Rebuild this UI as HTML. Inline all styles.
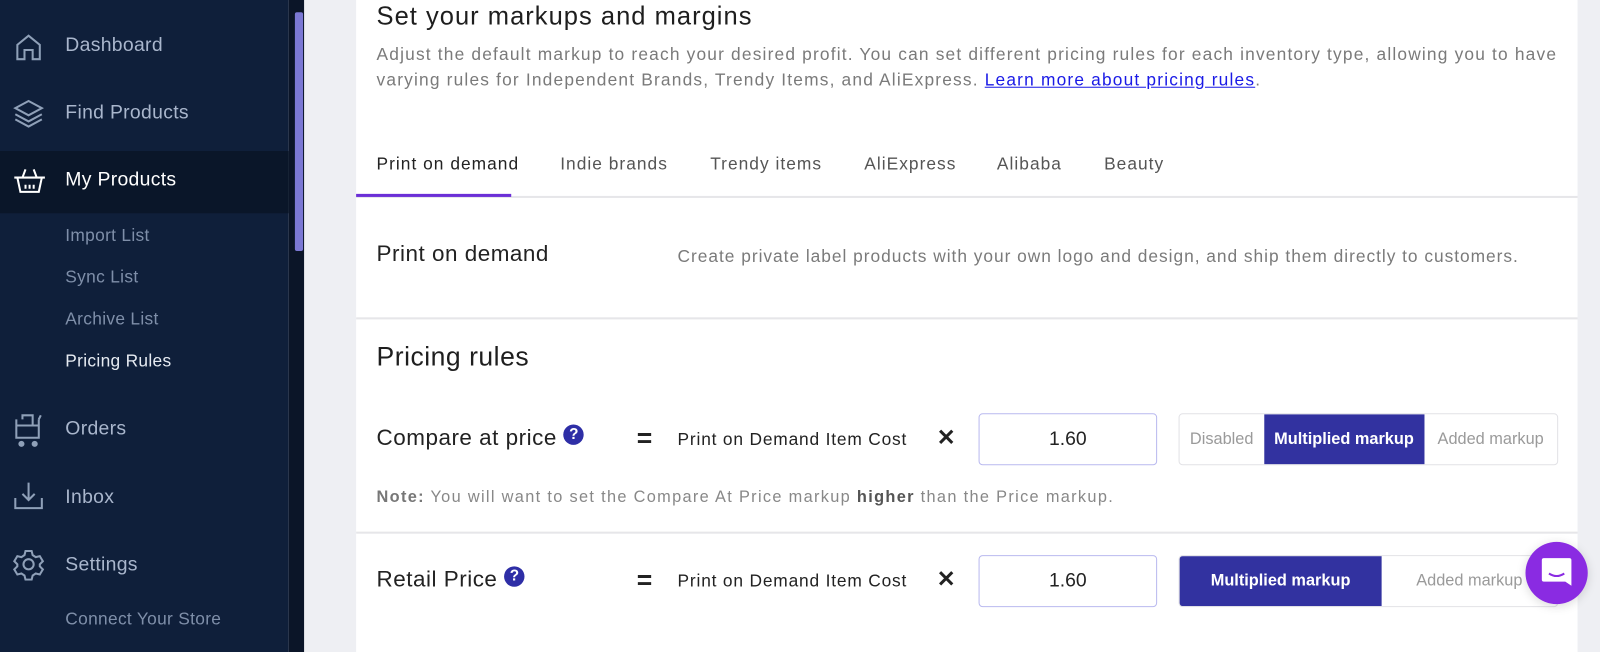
<!DOCTYPE html>
<html><head><meta charset="utf-8"><style>
*{box-sizing:border-box;margin:0;padding:0}
body{width:1600px;height:639px;overflow:hidden;background:#eeeff3;font-family:"Liberation Sans",sans-serif;position:relative}
.w{position:absolute;left:0;top:0;width:1568px;height:626px;transform:scale(1.0204);transform-origin:0 0}
.sb{position:absolute;left:0;top:0;width:283px;height:639px;background:#0f1f3a}
.sc{position:absolute;left:283px;top:0;width:15px;height:639px;background:#0b1528}
.thumb{position:absolute;left:289px;top:12px;width:8px;height:234px;background:#7b78d4;border-radius:2px}
.it{position:absolute;left:64px;color:#a9b6cc;font-size:19px;letter-spacing:.3px}
.sub{position:absolute;left:64px;color:#7f8fa9;font-size:17px;letter-spacing:.3px}
.ic{position:absolute;left:12px}
.card{position:absolute;left:349px;top:0;width:1197px;height:639px;background:#fff}
.a{position:absolute;white-space:nowrap}
.hr{position:absolute;left:349px;width:1197px;height:2px;background:#e6e6e9}
.q{display:inline-block;width:20px;height:20px;border-radius:50%;background:#2e2ea6;color:#fff;font-size:15px;font-weight:bold;text-align:center;line-height:20px;letter-spacing:0}
.inp{position:absolute;left:959px;width:175px;height:51px;border:1px solid #b9b9ef;border-radius:4px;font-size:19px;text-align:center;line-height:49px;color:#222}
.seg{position:absolute;height:51px;border:1px solid #e2e2e6;border-radius:4px;overflow:hidden;display:flex;font-size:16px;color:#9a9a9a}
.seg div{display:flex;align-items:center;justify-content:center;height:100%}
.on{background:#3232a0;color:#fff;font-weight:bold}
.tab{font-size:17px;letter-spacing:1px;color:#555;top:151px}
</style></head><body><div class="w">
<div class="sb"></div>
<div style="position:absolute;left:0;top:148px;width:283px;height:61px;background:#0a1629"></div>
<div class="sc"></div><div class="thumb"></div>
<svg class="ic" style="top:31px" width="32" height="32" viewBox="0 0 32 32" fill="none" stroke="#8fa0b8" stroke-width="2"><path d="M5 27V13L16 4l11 9v14h-7v-9h-8v9z"/></svg>
<div class="it" style="top:34px">Dashboard</div>
<svg class="ic" style="top:96px" width="32" height="32" viewBox="0 0 32 32" fill="none" stroke="#8fa0b8" stroke-width="2"><path d="M3 10l13-7 13 7-13 7z M3 16l13 7 13-7 M3 21l13 7 13-7"/></svg>
<div class="it" style="top:100px">Find Products</div>
<svg class="ic" style="top:161px" width="34" height="32" viewBox="0 0 34 32" fill="none" stroke="#fff" stroke-width="2"><path d="M2 13h30M5 13l3 14h18l3-14M10 13l3-8M24 13l-3-8M13 20v4M17 20v4M21 20v4"/></svg>
<div class="it" style="top:166px;color:#fff">My Products</div>
<div class="sub" style="top:221px">Import List</div>
<div class="sub" style="top:262px">Sync List</div>
<div class="sub" style="top:303px">Archive List</div>
<div class="sub" style="top:344px;color:#e6ebf2">Pricing Rules</div>
<svg class="ic" style="top:405px" width="32" height="34" viewBox="0 0 32 34" fill="none" stroke="#8fa0b8" stroke-width="2"><path d="M4 6v18h22V6M4 12h22M10 6V2h10v10M28 2l-2 4"/><circle cx="9" cy="30" r="2" fill="#8fa0b8"/><circle cx="22" cy="30" r="2" fill="#8fa0b8"/></svg>
<div class="it" style="top:410px">Orders</div>
<svg class="ic" style="top:470px" width="32" height="32" viewBox="0 0 32 32" fill="none" stroke="#8fa0b8" stroke-width="2"><path d="M3 18v10h26V18M16 3v17M10 14l6 6 6-6"/></svg>
<div class="it" style="top:477px">Inbox</div>
<svg class="ic" style="top:537px" width="32" height="32" viewBox="0 0 32 32" fill="none" stroke="#8fa0b8" stroke-width="2"><circle cx="16" cy="16" r="5"/><path d="M13 3h6l1 4 3 2 4-1 3 5-3 3v2l3 3-3 5-4-1-3 2-1 4h-6l-1-4-3-2-4 1-3-5 3-3v-2l-3-3 3-5 4 1 3-2z"/></svg>
<div class="it" style="top:543px">Settings</div>
<div class="sub" style="top:597px">Connect Your Store</div>

<div class="card"></div>
<div class="a" style="left:369px;top:2px;font-size:25px;letter-spacing:1px;color:#1e1e1e">Set your markups and margins</div>
<div class="a" style="left:369px;top:41px;font-size:17px;letter-spacing:1.15px;color:#7a7a7a;line-height:25px">Adjust the default markup to reach your desired profit. You can set different pricing rules for each inventory type, allowing you to have<br>varying rules for Independent Brands, Trendy Items, and AliExpress. <a style="color:#1a1ae6;text-decoration:underline">Learn more about pricing rules</a>.</div>
<div class="a tab" style="left:369px;color:#222">Print on demand</div>
<div class="a tab" style="left:549px">Indie brands</div>
<div class="a tab" style="left:696px">Trendy items</div>
<div class="a tab" style="left:847px">AliExpress</div>
<div class="a tab" style="left:977px">Alibaba</div>
<div class="a tab" style="left:1082px">Beauty</div>
<div class="hr" style="top:192px"></div>
<div class="a" style="left:349px;top:190px;width:152px;height:3px;background:#6b2fd6"></div>
<div class="a" style="left:369px;top:236px;font-size:22px;letter-spacing:.5px;color:#222">Print on demand</div>
<div class="a" style="left:664px;top:242px;font-size:17px;letter-spacing:.95px;color:#7a7a7a">Create private label products with your own logo and design, and ship them directly to customers.</div>
<div class="hr" style="top:311px"></div>
<div class="a" style="left:369px;top:334px;font-size:26px;letter-spacing:.5px;color:#1e1e1e">Pricing rules</div>

<div class="a" style="left:369px;top:416px;font-size:22px;letter-spacing:.5px;color:#222">Compare at price <span class="q" style="vertical-align:6px">?</span></div>
<div class="a" style="left:624px;top:414px;font-size:26px;font-weight:bold;color:#222">=</div>
<div class="a" style="left:664px;top:421px;font-size:17px;letter-spacing:.8px;color:#222">Print on Demand Item Cost</div>
<div class="a" style="left:918px;top:416px;font-size:22px;font-weight:bold;color:#222">✕</div>
<div class="inp" style="top:405px">1.60</div>
<div class="seg" style="left:1155px;top:405px;width:372px"><div style="width:83px">Disabled</div><div class="on" style="width:158px">Multiplied markup</div><div style="width:131px">Added markup</div></div>
<div class="a" style="left:369px;top:479px;font-size:16px;letter-spacing:1.3px;color:#888"><b style="color:#777">Note:</b> You will want to set the Compare At Price markup <b style="color:#555">higher</b> than the Price markup.</div>
<div class="hr" style="top:521px"></div>

<div class="a" style="left:369px;top:555px;font-size:22px;letter-spacing:.5px;color:#222">Retail Price <span class="q" style="vertical-align:6px">?</span></div>
<div class="a" style="left:624px;top:553px;font-size:26px;font-weight:bold;color:#222">=</div>
<div class="a" style="left:664px;top:560px;font-size:17px;letter-spacing:.8px;color:#222">Print on Demand Item Cost</div>
<div class="a" style="left:918px;top:555px;font-size:22px;font-weight:bold;color:#222">✕</div>
<div class="inp" style="top:544px">1.60</div>
<div class="seg" style="left:1155px;top:544px;width:372px"><div class="on" style="width:199px">Multiplied markup</div><div style="width:173px">Added markup</div></div>

<div class="a" style="left:1495px;top:531px;width:61px;height:61px;border-radius:50%;background:#8a2be2;box-shadow:0 2px 10px rgba(0,0,0,.15)"></div>
<svg class="a" style="left:1507px;top:543px" width="37" height="37" viewBox="0 0 37 37"><path d="M6 4h25a2 2 0 0 1 2 2v25l-6-4H6a2 2 0 0 1-2-2V6a2 2 0 0 1 2-2z" fill="#fff"/><path d="M11 19q7.5 5 15 0" stroke="#8a2be2" stroke-width="2" fill="none"/></svg>
</div></body></html>
